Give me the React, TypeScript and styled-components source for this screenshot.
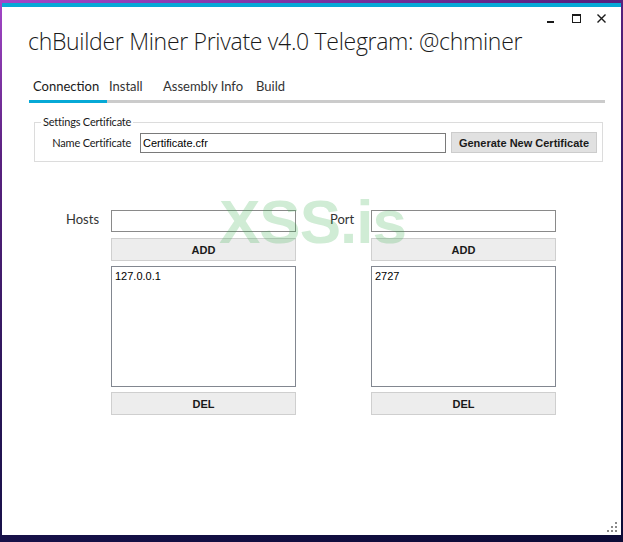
import React from "react";
import styled, { createGlobalStyle } from "styled-components";

const GlobalStyle = createGlobalStyle`
  html, body {
    margin: 0;
    padding: 0;
  }
  body {
    width: 623px;
    height: 542px;
    overflow: hidden;
    background: linear-gradient(165deg, #a447c8 0%, #5a2180 22%, #2a1658 55%, #141046 80%, #0c0b36 100%);
    font-family: Lato, "Open Sans", sans-serif;
  }
`;

const App: React.FC = () => {
  return (
    <>
      <GlobalStyle />
      <Window>
        <TitleBar>
          <Title>chBuilder Miner Private v4.0 Telegram: @chminer</Title>
          <Controls>
            <ControlButton aria-label="minimize">
              <svg width="9" height="9" viewBox="0 0 9 9">
                <rect x="0" y="7" width="7" height="2" fill="#1a1a1a" />
              </svg>
            </ControlButton>
            <ControlButton aria-label="maximize">
              <svg width="9" height="9" viewBox="0 0 9 9">
                <rect x="0.5" y="0.5" width="8" height="8" fill="none" stroke="#1a1a1a" />
                <rect x="0" y="0" width="9" height="2" fill="#1a1a1a" />
              </svg>
            </ControlButton>
            <ControlButton aria-label="close">
              <svg width="9" height="9" viewBox="0 0 9 9">
                <path d="M0.5 0.5 L8.5 8.5 M8.5 0.5 L0.5 8.5" stroke="#1a1a1a" strokeWidth="1.4" />
              </svg>
            </ControlButton>
          </Controls>
        </TitleBar>

        <TabStrip>
          <Tab $active $w={78} $pl={4}>Connection</Tab>
          <Tab $w={52} $pl={2}>Install</Tab>
          <Tab $w={93} $pl={4}>Assembly Info</Tab>
          <Tab $w={50} $pl={4}>Build</Tab>
        </TabStrip>

        <GroupBox>
          <Legend>Settings Certificate</Legend>
          <CertRow>
            <FieldLabel>Name Certificate</FieldLabel>
            <CertInput defaultValue="Certificate.cfr" />
            <GenerateButton>Generate New Certificate</GenerateButton>
          </CertRow>
        </GroupBox>

        <Lists>
          <SideLabel>Hosts</SideLabel>
          <Stack>
            <TextInput />
            <ActionButton>ADD</ActionButton>
            <ListBox>
              <ListItem>127.0.0.1</ListItem>
            </ListBox>
            <ActionButton $gap={5}>DEL</ActionButton>
          </Stack>
          <span />
          <SideLabel>Port</SideLabel>
          <Stack>
            <TextInput />
            <ActionButton>ADD</ActionButton>
            <ListBox>
              <ListItem>2727</ListItem>
            </ListBox>
            <ActionButton $gap={5}>DEL</ActionButton>
          </Stack>
        </Lists>

        <Watermark>XSS.is</Watermark>

        <Grip>
          <svg width="10" height="10" viewBox="0 0 10 10">
            <rect x="8" y="0" width="2" height="2" fill="#8a8a8a" />
            <rect x="4" y="4" width="2" height="2" fill="#8a8a8a" />
            <rect x="8" y="4" width="2" height="2" fill="#8a8a8a" />
            <rect x="0" y="8" width="2" height="2" fill="#8a8a8a" />
            <rect x="4" y="8" width="2" height="2" fill="#8a8a8a" />
            <rect x="8" y="8" width="2" height="2" fill="#8a8a8a" />
          </svg>
        </Grip>
      </Window>
    </>
  );
};

const Window = styled.div`
  position: relative;
  margin: 3px 0 0 2px;
  width: 619px;
  height: 532px;
  box-sizing: border-box;
  background: #ffffff;
  border-top: 4px solid #06a9d6;
  display: flex;
  flex-direction: column;
`;

const TitleBar = styled.div`
  display: flex;
  justify-content: space-between;
  align-items: flex-start;
  padding-left: 26px;
`;

const Title = styled.h1`
  flex: 1;
  min-width: 0;
  margin: 18px 0 0;
  font-family: "Open Sans", sans-serif;
  font-size: 23px;
  line-height: 32px;
  font-weight: 300;
  letter-spacing: -0.3px;
  color: #1a1a1a;
  white-space: nowrap;
`;

const Controls = styled.div`
  flex-shrink: 0;
  display: flex;
  padding: 7px 7px 0 0;
`;

const ControlButton = styled.button`
  width: 25px;
  height: 9px;
  padding: 0;
  border: none;
  background: transparent;
  display: flex;
  justify-content: center;
  align-items: flex-start;
`;

const TabStrip = styled.div`
  display: flex;
  margin: 21px 16px 0 27px;
  border-bottom: 3px solid #cbcbcb;
`;

const Tab = styled.div<{ $active?: boolean; $w: number; $pl: number }>`
  box-sizing: border-box;
  width: ${({ $w }) => $w}px;
  height: ${({ $active }) => ($active ? 25 : 22)}px;
  margin-bottom: ${({ $active }) => ($active ? -3 : 0)}px;
  padding-left: ${({ $pl }) => $pl}px;
  border-bottom: ${({ $active }) => ($active ? "3px solid #06a9d6" : "none")};
  font-size: 13px;
  line-height: 17px;
  color: ${({ $active }) => ($active ? "#1a1a1a" : "#333333")};
  white-space: nowrap;
`;

const GroupBox = styled.fieldset`
  margin: 12px 18px 0 32px;
  padding: 3px 5px 8px 0;
  min-width: 0;
  border: 1px solid #dcdcdc;
`;

const Legend = styled.legend`
  margin-left: 6px;
  padding: 0 2px;
  font-size: 11px;
  line-height: 14px;
  letter-spacing: -0.2px;
  color: #1a1a1a;
`;

const CertRow = styled.div`
  display: flex;
  align-items: center;
`;

const FieldLabel = styled.span`
  width: 96px;
  margin-right: 9px;
  text-align: right;
  font-size: 11px;
  letter-spacing: -0.2px;
  color: #1a1a1a;
  white-space: nowrap;
`;

const CertInput = styled.input`
  box-sizing: border-box;
  width: 306px;
  height: 20px;
  margin: 0;
  padding: 0 2px;
  border: 1px solid #7a7a7a;
  font-family: "Liberation Sans", Arial, sans-serif;
  font-size: 11px;
  color: #000;
  outline: none;
`;

const GenerateButton = styled.button`
  box-sizing: border-box;
  width: 146px;
  height: 21px;
  margin-left: 5px;
  padding: 0;
  background: #e1e1e1;
  border: 1px solid #cccccc;
  font-family: "Liberation Sans", Arial, sans-serif;
  font-weight: bold;
  font-size: 11px;
  color: #1a1a1a;
`;

const Lists = styled.div`
  display: grid;
  grid-template-columns: 45px 185px 34px 41px 185px;
  margin-top: 48px;
  padding-left: 64px;
`;

const SideLabel = styled.span`
  padding-top: 1px;
  font-size: 13px;
  line-height: 17px;
  color: #333333;
`;

const Stack = styled.div`
  display: flex;
  flex-direction: column;
`;

const TextInput = styled.input`
  box-sizing: border-box;
  width: 185px;
  height: 22px;
  margin: 0;
  border: 1px solid #8a8a8a;
  outline: none;
`;

const ActionButton = styled.button<{ $gap?: number }>`
  box-sizing: border-box;
  height: 23px;
  margin-top: ${({ $gap }) => $gap ?? 6}px;
  padding: 0;
  background: #ededed;
  border: 1px solid #cfcfcf;
  font-family: "Liberation Sans", Arial, sans-serif;
  font-weight: bold;
  font-size: 11px;
  color: #1a1a1a;
`;

const ListBox = styled.div`
  box-sizing: border-box;
  height: 121px;
  margin-top: 5px;
  padding: 2px 3px;
  border: 1px solid #828790;
`;

const ListItem = styled.div`
  font-family: "Liberation Sans", Arial, sans-serif;
  font-size: 11px;
  line-height: 14px;
  color: #000;
`;

const Watermark = styled.div`
  position: absolute;
  left: 217px;
  top: 184px;
  font-family: "Liberation Sans", Arial, sans-serif;
  font-weight: bold;
  font-size: 62px;
  line-height: 62px;
  letter-spacing: -1px;
  color: rgba(60, 175, 80, 0.24);
  pointer-events: none;
`;

const Grip = styled.div`
  position: absolute;
  right: 4px;
  bottom: 3px;
  width: 10px;
  height: 10px;
  line-height: 0;
`;

export default App;
